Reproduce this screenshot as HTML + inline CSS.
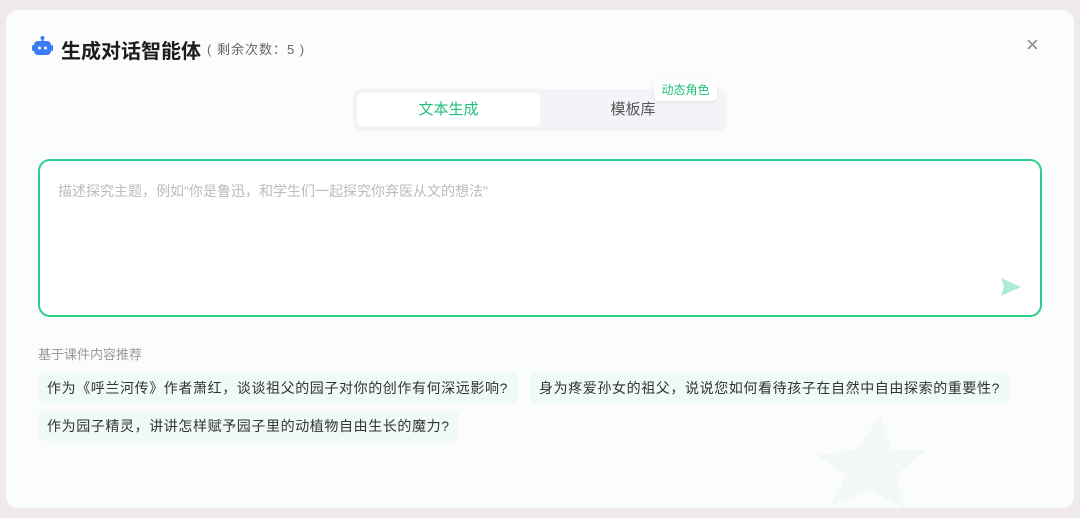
<!DOCTYPE html>
<html><head><meta charset="utf-8"><style>
*{margin:0;padding:0;box-sizing:border-box}
body{width:1080px;height:518px;background:#efe9e9;font-family:"Liberation Sans","Noto Sans CJK SC",sans-serif;position:relative;overflow:hidden}
.card{position:absolute;left:6px;top:10px;width:1068px;height:498px;background:#fbfdfd;border-radius:12px;overflow:hidden}
.title{position:absolute;left:61px;top:35px;font-size:20px;font-weight:bold;color:#1d1d1f}
.sub{position:absolute;left:207px;top:39px;font-size:13px;color:#666;letter-spacing:1px}
.close{position:absolute;left:1026px;top:32px;font-size:22px;color:#888}
.tabs{position:absolute;left:353px;top:89px;width:374px;height:42px;background:#f2f4f8;border-radius:8px}
.t1{position:absolute;left:4px;top:4px;width:183px;height:33px;background:#fff;border-radius:5px;color:#1fbf7a;font-size:15px;text-align:center;line-height:33px}
.t2{position:absolute;left:190px;top:4px;width:180px;height:33px;color:#555;font-size:15px;text-align:center;line-height:33px}
.badge{position:absolute;left:654px;top:80px;width:63px;height:21px;background:#fff;border-radius:5px;color:#1fbf7a;font-size:12px;text-align:center;line-height:21px;box-shadow:0 1px 3px rgba(0,0,0,.08)}
.box{position:absolute;left:38px;top:159px;width:1004px;height:158px;border:2px solid #2ccf8a;border-radius:12px;background:#fff}
.ph{position:absolute;left:18px;top:20px;font-size:14px;color:#bbb}
.lbl{position:absolute;left:38px;top:344px;font-size:13px;color:#999}
.chip{position:absolute;height:30px;line-height:30px;padding:0 9px;background:#eef9f8;border-radius:5px;font-size:14px;color:#333;letter-spacing:.6px;white-space:nowrap}
</style></head><body>
<div class="card">
<svg style="position:absolute;left:795px;top:385px" width="140" height="120" viewBox="0 0 140 120"><path d="M80 20 L90 55 L125 55 L95 80 L105 115 L70 95 L30 110 L45 80 L15 60 L55 55Z" fill="#f3f7f5"/></svg>
</div>
<svg style="position:absolute;left:32px;top:36px" width="21" height="20" viewBox="0 0 21 20"><circle cx="10.5" cy="2" r="2" fill="#3b7cf6"/><rect x="9.5" y="2" width="2" height="4" fill="#3b7cf6"/><rect x="2" y="5" width="17" height="14" rx="4" fill="#3b7cf6"/><rect x="0" y="9" width="2" height="6" rx="1" fill="#3b7cf6"/><rect x="19" y="9" width="2" height="6" rx="1" fill="#3b7cf6"/><circle cx="7.5" cy="12" r="1.5" fill="#fff"/><circle cx="13.5" cy="12" r="1.5" fill="#fff"/></svg>
<div class="title">生成对话智能体</div>
<div class="sub">( 剩余次数：5 )</div>
<div class="close">×</div>
<div class="tabs"><div class="t1">文本生成</div><div class="t2">模板库</div></div>
<div class="badge">动态角色</div>
<div class="box"><div class="ph">描述探究主题，例如"你是鲁迅，和学生们一起探究你弃医从文的想法"</div>
<svg style="position:absolute;left:960px;top:116px" width="22" height="20" viewBox="0 0 22 20"><path d="M1 1 L21 10 L1 19 L4 10Z" fill="#aeebd3"/></svg></div>
<div class="lbl">基于课件内容推荐</div>
<div class="chip" style="left:38px;top:373px">作为《呼兰河传》作者萧红，谈谈祖父的园子对你的创作有何深远影响?</div>
<div class="chip" style="left:530px;top:373px">身为疼爱孙女的祖父，说说您如何看待孩子在自然中自由探索的重要性?</div>
<div class="chip" style="left:38px;top:411px">作为园子精灵，讲讲怎样赋予园子里的动植物自由生长的魔力?</div>
</body></html>
